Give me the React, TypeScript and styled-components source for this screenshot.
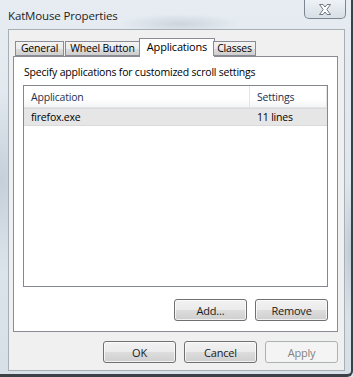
import React from "react";
import styled, { createGlobalStyle } from "styled-components";

const GlobalStyle = createGlobalStyle`
    html, body {
        margin: 0;
        padding: 0;
        background: #dfe6ed;
    }
    * {
        box-sizing: border-box;
    }
`;

const font = `"Open Sans", "Noto Sans", sans-serif`;

const Frame = styled.div`
    width: 353px;
    height: 377px;
    display: flex;
    flex-direction: column;
    font-family: ${font};
    font-size: 10.5px;
    letter-spacing: -0.2px;
    color: #000;
    background:
        radial-gradient(ellipse 40px 90px at 2px 180px, rgba(150, 165, 180, 0.35), transparent),
        radial-gradient(ellipse 60px 10px at 180px 24px, rgba(150, 160, 175, 0.3), transparent),
        radial-gradient(ellipse 10px 70px at 350px 250px, rgba(140, 155, 170, 0.35), transparent),
        linear-gradient(180deg, #e6ecf2 0%, #dde5ec 60%, #d7dfe7 100%);
    border-right: 2px solid #3c4148;
    border-bottom: 3px solid #3c4148;
    border-bottom-right-radius: 6px;
`;

const TitleBar = styled.div`
    height: 29px;
    display: flex;
    align-items: flex-start;
    justify-content: space-between;
    padding-left: 8px;
    padding-right: 5px;
`;

const Title = styled.div`
    font-size: 11.5px;
    letter-spacing: -0.15px;
    line-height: 12px;
    margin-top: 10px;
    color: #1e1e1e;
`;

const CloseButton = styled.div`
    width: 42px;
    height: 19px;
    border: 1px solid #7c8590;
    border-top: none;
    border-radius: 0 0 5px 5px;
    background: linear-gradient(180deg, #eef2f6 0%, #e2e8ee 50%, #d8dfe6 100%);
    display: flex;
    align-items: center;
    justify-content: center;
`;

const Client = styled.div`
    flex: 1;
    margin: 0 6px 3px 8px;
    background: #f0f0f0;
    border: 1px solid #a6aeb6;
    display: flex;
    flex-direction: column;
    padding: 8px 6px 0 4px;
`;

const TabStrip = styled.div`
    display: flex;
    align-items: flex-end;
    height: 18px;
    padding-left: 2px;
    position: relative;
    z-index: 1;
`;

const Tab = styled.div<{ $active?: boolean; $w: number }>`
    width: ${(p) => p.$w}px;
    height: ${(p) => (p.$active ? "19px" : "15px")};
    margin: ${(p) => (p.$active ? "0 -2px -1px -2px" : "0 1px 0 0")};
    border: 1px solid #898c95;
    border-bottom: ${(p) => (p.$active ? "none" : "1px solid #898c95")};
    background: ${(p) =>
        p.$active ? "#ffffff" : "linear-gradient(180deg, #f3f3f3 0%, #ebebeb 50%, #dddddd 51%, #cfcfcf 100%)"};
    display: flex;
    align-items: center;
    justify-content: center;
    line-height: 13px;
    white-space: nowrap;
    font-size: ${(p) => (p.$active ? "11px" : "10.5px")};
    padding-bottom: ${(p) => (p.$active ? "3px" : "0")};
`;

const Panel = styled.div`
    height: 276px;
    background: #ffffff;
    border: 1px solid #898c95;
    padding: 8px 9px 0 9px;
    display: flex;
    flex-direction: column;
`;

const Hint = styled.div`
    line-height: 14px;
    margin-bottom: 6px;
    padding-left: 1px;
`;

const ListView = styled.div`
    height: 202px;
    border: 1px solid #828790;
    background: #ffffff;
    display: flex;
    flex-direction: column;
`;

const HeaderRow = styled.div`
    display: flex;
    height: 22px;
    background: linear-gradient(180deg, #ffffff 0%, #ffffff 60%, #f4f5f6 100%);
    border-bottom: 1px solid #e3e4e6;
`;

const HeaderCell = styled.div<{ $w?: number }>`
    ${(p) => (p.$w ? `width: ${p.$w}px;` : "flex: 1;")}
    padding-left: 7px;
    display: flex;
    align-items: center;
    color: #1e3250;
    border-right: 1px solid #e3e4e6;
`;

const Row = styled.div<{ $selected?: boolean }>`
    display: flex;
    height: 18px;
    background: ${(p) => (p.$selected ? "#e6e6e6" : "transparent")};
    border: 1px solid ${(p) => (p.$selected ? "#dadada" : "transparent")};
    border-left: none;
    border-right: none;
`;

const Cell = styled.div<{ $w?: number }>`
    ${(p) => (p.$w ? `width: ${p.$w}px;` : "flex: 1;")}
    padding-left: 7px;
    display: flex;
    align-items: center;
`;

const ButtonRow = styled.div<{ $top: number }>`
    display: flex;
    justify-content: flex-end;
    gap: 8px;
    margin-top: ${(p) => p.$top}px;
`;

const Button = styled.div<{ $disabled?: boolean }>`
    width: 73px;
    height: 22px;
    border: 1px solid ${(p) => (p.$disabled ? "#adb2b5" : "#707070")};
    border-radius: 3px;
    background: ${(p) =>
        p.$disabled
            ? "#f4f4f4"
            : "linear-gradient(180deg, #f2f2f2 0%, #ebebeb 48%, #dddddd 50%, #cfcfcf 100%)"};
    box-shadow: inset 0 0 0 1px ${(p) => (p.$disabled ? "#f4f4f4" : "rgba(255,255,255,0.7)")};
    color: ${(p) => (p.$disabled ? "#838383" : "#1a1a1a")};
    font-size: 11px;
    display: flex;
    align-items: center;
    justify-content: center;
`;

const CloseGlyph = () => (
    <svg width="14" height="11" viewBox="0 0 14 11">
        <path
            d="M1.5 0.5 L5 0.5 L7 3 L9 0.5 L12.5 0.5 L8.8 5.5 L12.5 10.5 L9 10.5 L7 8 L5 10.5 L1.5 10.5 L5.2 5.5 Z"
            fill="#ffffff"
            stroke="#6f7884"
            strokeWidth="1"
            strokeLinejoin="round"
        />
    </svg>
);

const App: React.FC = () => {
    return (
        <>
            <GlobalStyle />
            <Frame>
                <TitleBar>
                    <Title>KatMouse Properties</Title>
                    <CloseButton>
                        <CloseGlyph />
                    </CloseButton>
                </TitleBar>
                <Client>
                    <TabStrip>
                        <Tab $w={49}>General</Tab>
                        <Tab $w={75}>Wheel Button</Tab>
                        <Tab $w={76} $active>Applications</Tab>
                        <Tab $w={43}>Classes</Tab>
                    </TabStrip>
                    <Panel>
                        <Hint>Specify applications for customized scroll settings</Hint>
                        <ListView>
                            <HeaderRow>
                                <HeaderCell $w={226}>Application</HeaderCell>
                                <HeaderCell $w={77}>Settings</HeaderCell>
                            </HeaderRow>
                            <Row $selected>
                                <Cell $w={226}>firefox.exe</Cell>
                                <Cell>11 lines</Cell>
                            </Row>
                        </ListView>
                        <ButtonRow $top={12}>
                            <Button>Add...</Button>
                            <Button>Remove</Button>
                        </ButtonRow>
                    </Panel>
                    <ButtonRow $top={9}>
                        <Button>OK</Button>
                        <Button>Cancel</Button>
                        <Button $disabled>Apply</Button>
                    </ButtonRow>
                </Client>
            </Frame>
        </>
    );
};

export default App;
